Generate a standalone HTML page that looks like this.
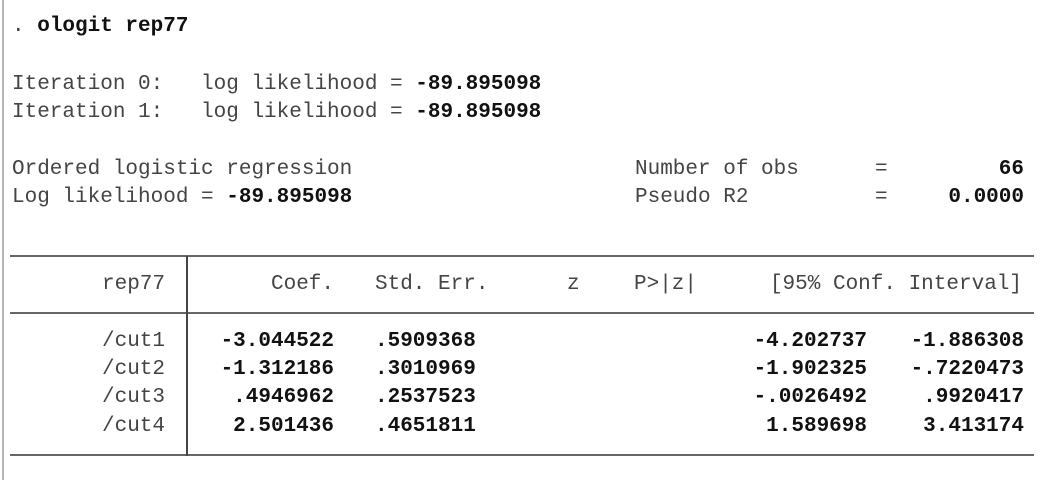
<!DOCTYPE html>
<html><head><meta charset="utf-8"><style>
html,body{margin:0;padding:0;background:#fff;width:1060px;height:480px;overflow:hidden;position:relative}
body{font-family:"Liberation Mono",monospace;font-size:21px;color:#444}
.t{position:absolute;white-space:pre;line-height:26px;height:26px}
b{color:#111;font-weight:bold}
.hl{position:absolute;left:10px;width:1024px;height:2px;background:#666}
.vl{position:absolute;left:186px;top:256px;width:2px;height:200px;background:#444}
.lb{position:absolute;left:2px;top:0;width:2px;height:480px;background:#b5b5b5}
</style></head><body>
<div class="lb"></div>
<div class="t" style="left:12px;top:14px">. <b>ologit rep77</b></div>
<div class="t" style="left:12px;top:72px">Iteration 0:   log likelihood = <b>-89.895098</b></div>
<div class="t" style="left:12px;top:100px">Iteration 1:   log likelihood = <b>-89.895098</b></div>
<div class="t" style="left:12px;top:157px">Ordered logistic regression</div>
<div class="t" style="left:12px;top:185px">Log likelihood = <b>-89.895098</b></div>
<div class="t" style="left:635px;top:157px">Number of obs</div>
<div class="t" style="left:635px;top:185px">Pseudo R2</div>
<div class="t" style="left:875px;top:157px">=</div>
<div class="t" style="left:875px;top:185px">=</div>
<div class="t" style="right:36px;top:157px"><b>66</b></div>
<div class="t" style="right:36px;top:185px"><b>0.0000</b></div>

<div class="hl" style="top:255px"></div>
<div class="hl" style="top:312px"></div>
<div class="hl" style="top:454px"></div>
<div class="vl"></div>

<div class="t" style="right:895px;top:272px">rep77</div>
<div class="t" style="right:726px;top:272px">Coef.</div>
<div class="t" style="left:375px;top:272px">Std. Err.</div>
<div class="t" style="left:567px;top:272px">z</div>
<div class="t" style="left:634px;top:272px">P&gt;|z|</div>
<div class="t" style="right:38px;top:272px">[95% Conf. Interval]</div>

<div class="t" style="right:895px;top:329px">/cut1</div>
<div class="t" style="right:895px;top:357px">/cut2</div>
<div class="t" style="right:895px;top:385px">/cut3</div>
<div class="t" style="right:895px;top:414px">/cut4</div>

<div class="t" style="right:726px;top:329px"><b>-3.044522</b></div>
<div class="t" style="right:726px;top:357px"><b>-1.312186</b></div>
<div class="t" style="right:726px;top:385px"><b>.4946962</b></div>
<div class="t" style="right:726px;top:414px"><b>2.501436</b></div>

<div class="t" style="left:375px;top:329px"><b>.5909368</b></div>
<div class="t" style="left:375px;top:357px"><b>.3010969</b></div>
<div class="t" style="left:375px;top:385px"><b>.2537523</b></div>
<div class="t" style="left:375px;top:414px"><b>.4651811</b></div>

<div class="t" style="right:193px;top:329px"><b>-4.202737</b></div>
<div class="t" style="right:193px;top:357px"><b>-1.902325</b></div>
<div class="t" style="right:193px;top:385px"><b>-.0026492</b></div>
<div class="t" style="right:193px;top:414px"><b>1.589698</b></div>

<div class="t" style="right:36px;top:329px"><b>-1.886308</b></div>
<div class="t" style="right:36px;top:357px"><b>-.7220473</b></div>
<div class="t" style="right:36px;top:385px"><b>.9920417</b></div>
<div class="t" style="right:36px;top:414px"><b>3.413174</b></div>
</body></html>
